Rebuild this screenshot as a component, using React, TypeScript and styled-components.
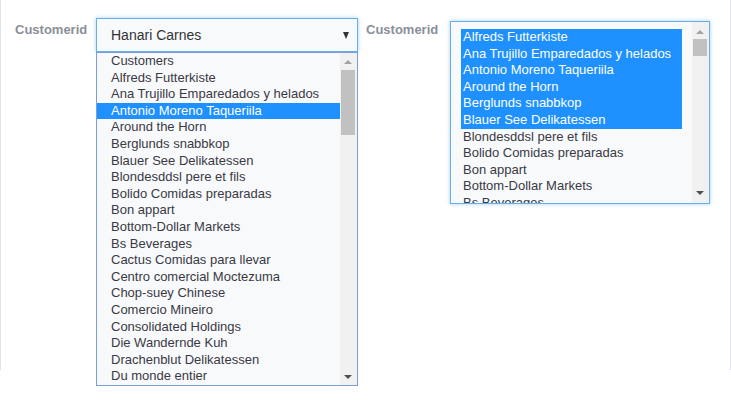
import styled, { createGlobalStyle } from "styled-components";

const GlobalStyle = createGlobalStyle`
  html, body {
    margin: 0;
    padding: 0;
    background: #fff;
    font-family: "Liberation Sans", Arial, sans-serif;
  }
  #root {
    min-height: 411px;
  }
`;

const Panel = styled.div`
  height: 370px;
  border-left: 1px solid #dde6ef;
  border-right: 1px solid #dde6ef;
  box-sizing: border-box;
  display: flex;
  align-items: flex-start;
  padding: 18px 0 0 14px;
`;

const Group = styled.div<{ $gap?: number }>`
  display: flex;
  align-items: flex-start;
  position: relative;
  margin-left: ${p => p.$gap ?? 0}px;
`;

const Label = styled.label<{ $width: number }>`
  width: ${p => p.$width}px;
  padding-top: 4px;
  font-size: 13px;
  font-weight: bold;
  color: #8a8f99;
`;

const SelectBox = styled.div`
  position: relative;
  width: 262px;
  height: 34px;
  box-sizing: border-box;
  border: 1px solid #66afe9;
  box-shadow: 0 0 4px rgba(102, 175, 233, 0.6);
  background: #f8f9fb;
  display: flex;
  align-items: center;
  justify-content: space-between;
  padding: 0 8px 0 14px;
  font-size: 14px;
  color: #333;
`;

const Caret = styled.span`
  width: 0;
  height: 0;
  border-left: 3.5px solid transparent;
  border-right: 3.5px solid transparent;
  border-top: 7px solid #333;
  margin-top: 1px;
`;

const Dropdown = styled.div`
  position: absolute;
  top: 34px;
  left: 81px;
  width: 262px;
  height: 334px;
  box-sizing: border-box;
  border: 1px solid #7d9dd6;
  background: #f8f9fb;
  display: flex;
  overflow: hidden;
  z-index: 2;
`;

const OptionList = styled.div<{ $pad: string }>`
  flex: 1;
  padding: ${p => p.$pad};
  overflow: hidden;
`;

const Option = styled.div<{ $selected?: boolean; $indent: number }>`
  height: 16.6px;
  line-height: 16.6px;
  font-size: 13px;
  padding-left: ${p => p.$indent}px;
  white-space: nowrap;
  color: ${p => (p.$selected ? "#fff" : "#3a3a44")};
  background: ${p => (p.$selected ? "#1e90ff" : "transparent")};
`;

const Scrollbar = styled.div`
  width: 17px;
  background: #f1f1f1;
  position: relative;
  flex-shrink: 0;
`;

const Arrow = styled.span<{ $down?: boolean; $top?: number; $bottom?: number }>`
  position: absolute;
  left: 4px;
  ${p => (p.$top !== undefined ? `top: ${p.$top}px;` : "")}
  ${p => (p.$bottom !== undefined ? `bottom: ${p.$bottom}px;` : "")}
  width: 0;
  height: 0;
  border-left: 4px solid transparent;
  border-right: 4px solid transparent;
  ${p =>
    p.$down ? "border-top: 4px solid #505050;" : "border-bottom: 4px solid #a3a3a3;"}
`;

const Thumb = styled.div<{ $top: number; $height: number }>`
  position: absolute;
  left: 1px;
  right: 2px;
  top: ${p => p.$top}px;
  height: ${p => p.$height}px;
  background: #c1c1c1;
`;

const ListBox = styled.div`
  width: 260px;
  height: 183px;
  margin-top: 3px;
  box-sizing: border-box;
  border: 1px solid #66afe9;
  box-shadow: 0 0 4px rgba(102, 175, 233, 0.6);
  background: #f8f9fb;
  display: flex;
  overflow: hidden;
`;

const customers = [
  "Customers",
  "Alfreds Futterkiste",
  "Ana Trujillo Emparedados y helados",
  "Antonio Moreno Taqueriila",
  "Around the Horn",
  "Berglunds snabbkop",
  "Blauer See Delikatessen",
  "Blondesddsl pere et fils",
  "Bolido Comidas preparadas",
  "Bon appart",
  "Bottom-Dollar Markets",
  "Bs Beverages",
  "Cactus Comidas para llevar",
  "Centro comercial Moctezuma",
  "Chop-suey Chinese",
  "Comercio Mineiro",
  "Consolidated Holdings",
  "Die Wandernde Kuh",
  "Drachenblut Delikatessen",
  "Du monde entier",
];

const multi = customers.slice(1, 12);
const picked = multi.slice(0, 6);

export default function App() {
  return (
    <>
      <GlobalStyle />
      <Panel>
        <Group>
          <Label $width={81}>Customerid</Label>
          <SelectBox>
            Hanari Carnes
            <Caret />
          </SelectBox>
          <Dropdown>
            <OptionList $pad="0">
              {customers.map(c => (
                <Option key={c} $indent={14} $selected={c === "Antonio Moreno Taqueriila"}>
                  {c}
                </Option>
              ))}
            </OptionList>
            <Scrollbar>
              <Arrow $top={7} />
              <Thumb $top={17} $height={65} />
              <Arrow $down $bottom={6} />
            </Scrollbar>
          </Dropdown>
        </Group>
        <Group $gap={8}>
          <Label $width={84}>Customerid</Label>
          <ListBox>
            <OptionList $pad="7px 10px 0 10px">
              {multi.map(c => (
                <Option key={c} $indent={2} $selected={picked.includes(c)}>
                  {c}
                </Option>
              ))}
            </OptionList>
            <Scrollbar>
              <Arrow $top={8} />
              <Thumb $top={17} $height={17} />
              <Arrow $down $bottom={8} />
            </Scrollbar>
          </ListBox>
        </Group>
      </Panel>
    </>
  );
}
